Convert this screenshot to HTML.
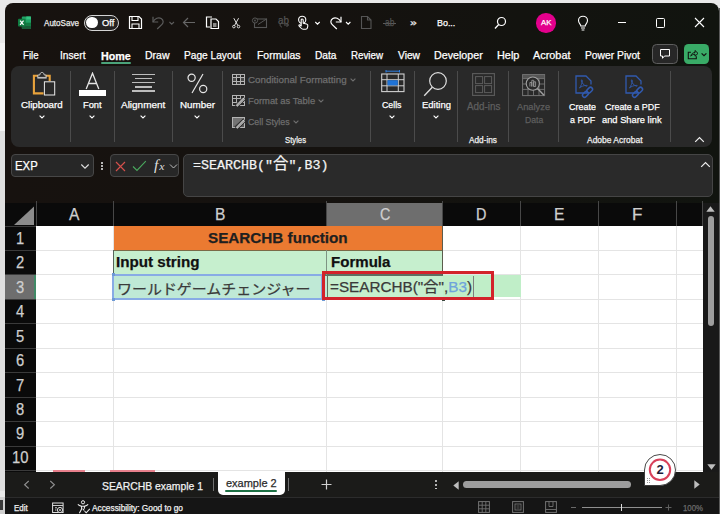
<!DOCTYPE html><html lang="en"><head><meta charset="utf-8"><title>Excel - SEARCHB function</title><style>
html,body{margin:0;padding:0}
body{width:720px;height:514px;overflow:hidden;position:relative;background:#e9e9e9;font-family:"Liberation Sans","Noto Sans CJK JP",sans-serif}
#r div,#r svg{position:absolute;display:block}
#r div.t{-webkit-text-stroke:0.25px;white-space:nowrap;transform-origin:0 50%;line-height:20px;height:20px}
#r{position:absolute;left:0;top:0;width:720px;height:514px;overflow:hidden}
</style></head><body><div id="r">
<div style="left:0px;top:0px;width:720px;height:514px;background:#e9e9e9;"></div>
<div style="left:0px;top:43px;width:5px;height:88px;background:#f4f4f4;"></div>
<div style="left:0px;top:131px;width:5px;height:360px;background:#dfdfdf;"></div>
<div style="left:719px;top:8px;width:1px;height:506px;background:#5a5a5a;"></div>
<div style="left:4.5px;top:3px;width:714.3px;height:520px;background:linear-gradient(90deg,#17120f 0%,#15120f 45%,#11140f 100%);border-radius:8px"></div>
<svg style="left:18px;top:15.7px;" width="13.4" height="13.4" viewBox="0 0 14 14">
<rect x="4" y="0.5" width="9.5" height="13" rx="1" fill="#21a366"/>
<rect x="8.7" y="0.5" width="4.8" height="3.3" fill="#33c481"/>
<rect x="8.7" y="3.8" width="4.8" height="3.2" fill="#21a366"/>
<rect x="8.7" y="7" width="4.8" height="3.2" fill="#107c41"/>
<rect x="4" y="7" width="4.7" height="3.2" fill="#185c37"/>
<rect x="4" y="10.2" width="9.5" height="3.3" rx="1" fill="#185c37"/>
<rect x="0" y="3" width="8" height="8" rx="1" fill="#107c41"/>
<path d="M2.2 4.8 L5.8 9.2 M5.8 4.8 L2.2 9.2" stroke="#fff" stroke-width="1.3"/>
</svg>
<div style="left:84.2px;top:15px;width:33.2px;height:13.8px;background:#242322;border:1px solid #d4d4d4;border-radius:9px"></div>
<div style="left:86.4px;top:17.4px;width:11.2px;height:11px;background:#ffffff;border-radius:50%"></div>
<svg style="left:128px;top:15px;" width="15" height="15" viewBox="0 0 15 15"><path d="M1.5 1.5 H11 L13.5 4 V13.5 H1.5 Z" fill="none" stroke="#fff" stroke-width="1.2"/>
<path d="M4 1.5 V5.5 H10 V1.5 M4 13.5 V9 H11 V13.5" fill="none" stroke="#fff" stroke-width="1.1"/></svg>
<svg style="left:151px;top:15px;" width="26" height="15" viewBox="0 0 26 15"><path d="M2 1.8 V7 H7.2" fill="none" stroke="#5c5c5c" stroke-width="1.2"/>
<path d="M2 7 C4 3.5 7.5 1.8 10.2 3.5 C12.8 5.2 12.5 7.8 11 9.3 L6.2 14" fill="none" stroke="#5c5c5c" stroke-width="1.2"/>
<path d="M18.5 7 L20.7 9.2 L23 7" fill="none" stroke="#5c5c5c" stroke-width="1.1"/></svg>
<svg style="left:182px;top:15px;" width="15" height="15" viewBox="0 0 15 15"><path d="M1.5 7.5 H13 M6 3 L1.5 7.5 L6 12" fill="none" stroke="#666" stroke-width="1.2"/></svg>
<svg style="left:205px;top:15px;" width="15" height="15" viewBox="0 0 15 15"><path d="M7 2 H1.5 V12 H5" fill="none" stroke="#fff" stroke-width="1.2"/>
<path d="M6 4 H11 L13.5 6.5 V13.5 H6 Z" fill="#15120f" stroke="#fff" stroke-width="1.2"/>
<path d="M8 9 H11.5 M8 11 H11.5" stroke="#fff" stroke-width="1"/></svg>
<svg style="left:230.8px;top:15.5px;" width="10.4" height="14" viewBox="0 0 13 15"><path d="M3.5 1.5 L8.5 10.5 M9.5 1.5 L4.5 10.5" stroke="#fff" stroke-width="1.1" fill="none"/>
<circle cx="3.6" cy="12" r="1.6" fill="none" stroke="#fff" stroke-width="1"/><circle cx="9.4" cy="12" r="1.6" fill="none" stroke="#fff" stroke-width="1"/></svg>
<svg style="left:251px;top:15px;" width="17" height="15" viewBox="0 0 17 15"><rect x="3.5" y="4" width="12" height="8.5" fill="none" stroke="#555555" stroke-width="1.1"/>
<path d="M15.5 4 L7 9.5" stroke="#555555" stroke-width="1" fill="none"/>
<circle cx="4" cy="5.5" r="2.6" fill="#15120f" stroke="#555555" stroke-width="1"/><circle cx="4" cy="5.5" r="0.9" fill="#555555"/></svg>
<svg style="left:277px;top:22px;" width="13" height="8" viewBox="0 0 13 8"><path d="M5 1 C2.5 1 2.5 5 5 5 M7 3 H11.5 M9.5 1 L11.5 3 L9.5 5 M7.5 3" fill="none" stroke="#555555" stroke-width="1"/></svg>
<svg style="left:296.5px;top:15px;" width="26" height="15" viewBox="0 0 26 15"><circle cx="5.2" cy="4.8" r="3.6" fill="none" stroke="#fff" stroke-width="1.1"/>
<path d="M4.2 11 V5 C4.2 3.6 6.2 3.6 6.2 5 V8.2 L9.6 9 C10.8 9.3 11 10 10.8 11 L10.4 12.8 C10.2 13.8 9.6 14.2 8.6 14.2 H6.2 C5.2 14.2 4.6 13.8 3.9 13 L2 10.8 C1.6 10.2 2.4 9.5 3 10 Z" fill="#15120f" stroke="#fff" stroke-width="1.1" stroke-linejoin="round"/>
<path d="M18.3 7 L20.5 9.2 L22.7 7" fill="none" stroke="#fff" stroke-width="1.1"/></svg>
<svg style="left:329px;top:15px;" width="24" height="15" viewBox="0 0 24 15"><path d="M12 1.8 V7 H6.8" fill="none" stroke="#fff" stroke-width="1.2"/>
<path d="M12 7 C10 3.5 6.5 1.8 3.8 3.5 C1.2 5.2 1.5 7.8 3 9.3 L7.8 14" fill="none" stroke="#fff" stroke-width="1.2"/>
<path d="M17 7 L19.2 9.2 L21.4 7" fill="none" stroke="#fff" stroke-width="1.1"/></svg>
<svg style="left:360px;top:15px;" width="13" height="15" viewBox="0 0 13 15"><path d="M1.5 1.5 H7.5 L11 5 V13.5 H1.5 Z M7.5 1.5 V5 H11" fill="none" stroke="#555555" stroke-width="1.1"/></svg>
<div style="left:383px;top:23.4px;width:13px;height:1px;background:#5a5a5a;"></div>
<svg style="left:494px;top:15.5px;" width="13" height="14" viewBox="0 0 13 14"><circle cx="7.5" cy="5.5" r="4" fill="none" stroke="#fff" stroke-width="1.2"/><path d="M4.7 8.5 L1 12.5" stroke="#fff" stroke-width="1.3"/></svg>
<div style="left:536px;top:13px;width:19.5px;height:19.5px;background:#e3008c;border-radius:50%"></div>
<svg style="left:576px;top:14.5px;" width="14" height="17" viewBox="0 0 14 17"><path d="M4.8 11 C4.8 9 2.5 8.5 2.5 5.5 C2.5 3 4.5 1.2 7 1.2 C9.5 1.2 11.5 3 11.5 5.5 C11.5 8.5 9.2 9 9.2 11 Z M5 13 H9 M5.6 15 H8.4" fill="none" stroke="#fff" stroke-width="1.1"/></svg>
<div style="left:617.5px;top:21.7px;width:8.5px;height:1px;background:#ffffff;"></div>
<div style="left:655.8px;top:18px;width:7.5px;height:7.5px;background:transparent;border:1px solid #fff;border-radius:1.5px"></div>
<svg style="left:694px;top:17px;" width="11" height="11" viewBox="0 0 11 11"><path d="M1 1 L10 10 M10 1 L1 10" stroke="#fff" stroke-width="1.1"/></svg>
<div style="left:101px;top:62.2px;width:30px;height:1.8px;background:#4ba37a;border-radius:1px"></div>
<div style="left:652.3px;top:44.2px;width:23.3px;height:17.8px;background:#272727;border:1px solid #5e5e5e;border-radius:4.5px"></div>
<svg style="left:658.8px;top:48.3px;" width="12" height="12" viewBox="0 0 12 12"><path d="M1.5 1.5 H10.5 V8 H5.5 L3.5 10.3 V8 H1.5 Z" fill="none" stroke="#fff" stroke-width="1"/></svg>
<div style="left:683.8px;top:44.2px;width:25.6px;height:19.8px;background:#39ab67;border-radius:4.5px"></div>
<svg style="left:686.5px;top:47.5px;" width="22" height="13" viewBox="0 0 22 13"><path d="M4 4.3 H1.3 V10.7 H9.3 V8.3" fill="none" stroke="#10130f" stroke-width="1.1"/>
<path d="M3.8 8.2 C4.3 5.6 6 4.6 8 4.6 V2.5 L11 5.4 L8 8.2 V6.3 C6.2 6.3 4.8 6.8 3.8 8.2 Z" fill="none" stroke="#10130f" stroke-width="1"/>
<path d="M14.6 5.3 L17 7.7 L19.4 5.3" fill="none" stroke="#10130f" stroke-width="1.2"/></svg>
<div style="left:11px;top:66.3px;width:701.2px;height:80.7px;background:#292929;border-radius:8px"></div>
<div style="left:70.1px;top:71px;width:1px;height:71px;background:#4b4b4b;"></div>
<div style="left:114.0px;top:71px;width:1px;height:71px;background:#4b4b4b;"></div>
<div style="left:172.0px;top:71px;width:1px;height:71px;background:#4b4b4b;"></div>
<div style="left:221.7px;top:71px;width:1px;height:71px;background:#4b4b4b;"></div>
<div style="left:369.9px;top:71px;width:1px;height:71px;background:#4b4b4b;"></div>
<div style="left:413.9px;top:71px;width:1px;height:71px;background:#4b4b4b;"></div>
<div style="left:456.8px;top:71px;width:1px;height:71px;background:#4b4b4b;"></div>
<div style="left:508.0px;top:71px;width:1px;height:71px;background:#4b4b4b;"></div>
<div style="left:558.2px;top:71px;width:1px;height:71px;background:#4b4b4b;"></div>
<div style="left:669.8px;top:71px;width:1px;height:71px;background:#4b4b4b;"></div>
<svg style="left:32px;top:71px;" width="24" height="25" viewBox="0 0 24 25"><path d="M6 4.7 H1.9 V22.4 H11.5" fill="none" stroke="#e9a33c" stroke-width="2.1"/>
<path d="M13.5 4.7 H17.7 V10" fill="none" stroke="#e9a33c" stroke-width="2.1"/>
<path d="M5.8 6.3 V4 H7.8 C7.8 0.6 12.2 0.6 12.2 4 H14.2 V6.3" fill="none" stroke="#c4c4c4" stroke-width="1"/>
<rect x="5.3" y="5.9" width="9.4" height="1.7" fill="#bdbdbd"/>
<rect x="12.4" y="10.8" width="10.3" height="13.2" fill="#292929" stroke="#ececec" stroke-width="1"/></svg>
<svg style="left:37.5px;top:114px;" width="8" height="6" viewBox="0 0 8 6"><path d="M1.6 1.6 L4 4 L6.4 1.6" fill="none" stroke="#ffffff" stroke-width="1.1"/></svg>
<svg style="left:85px;top:71.5px;" width="15" height="18" viewBox="0 0 15 18"><path d="M1.2 17 L7.5 1.2 L13.8 17 M3.6 11.5 H11.4" fill="none" stroke="#e6e6e6" stroke-width="1.3"/></svg>
<div style="left:79.3px;top:90px;width:26.7px;height:6.2px;background:#ffffff;"></div>
<svg style="left:88.3px;top:114px;" width="8" height="6" viewBox="0 0 8 6"><path d="M1.6 1.6 L4 4 L6.4 1.6" fill="none" stroke="#ffffff" stroke-width="1.1"/></svg>
<div style="left:132px;top:73.8px;width:23px;height:1.4px;background:#bcbcbc;"></div>
<div style="left:134.6px;top:77.95px;width:17.200000000000017px;height:1.4px;background:#bcbcbc;"></div>
<div style="left:132px;top:82.1px;width:23px;height:1.4px;background:#bcbcbc;"></div>
<div style="left:134.6px;top:86.25px;width:17.200000000000017px;height:1.4px;background:#bcbcbc;"></div>
<div style="left:132px;top:90.4px;width:23px;height:1.4px;background:#bcbcbc;"></div>
<svg style="left:138.7px;top:114px;" width="8" height="6" viewBox="0 0 8 6"><path d="M1.6 1.6 L4 4 L6.4 1.6" fill="none" stroke="#ffffff" stroke-width="1.1"/></svg>
<svg style="left:186.5px;top:72.5px;" width="21" height="21" viewBox="0 0 21 21"><circle cx="4.6" cy="4.8" r="3.6" fill="none" stroke="#e6e6e6" stroke-width="1.2"/><circle cx="16.2" cy="16" r="3.6" fill="none" stroke="#e6e6e6" stroke-width="1.2"/><path d="M16 1 L5 20" stroke="#e6e6e6" stroke-width="1.2"/></svg>
<svg style="left:193px;top:114px;" width="8" height="6" viewBox="0 0 8 6"><path d="M1.6 1.6 L4 4 L6.4 1.6" fill="none" stroke="#ffffff" stroke-width="1.1"/></svg>
<svg style="left:232px;top:73px;" width="14" height="13" viewBox="0 0 14 13"><rect x="0.5" y="1.5" width="12" height="10" fill="none" stroke="#b4b4b4" stroke-width="1"/><rect x="1" y="5" width="11" height="3" fill="#4a4a4a"/><rect x="5" y="2" width="3.5" height="9" fill="#3c3c3c"/><path d="M0.5 4.5 H12.5 M0.5 8.5 H12.5 M4.5 1.5 V11.5 M8.5 1.5 V11.5" stroke="#b4b4b4" stroke-width="1"/><rect x="5" y="5" width="3" height="3" fill="#1e1e1e"/></svg>
<svg style="left:232px;top:94px;" width="14" height="13" viewBox="0 0 14 13"><rect x="0.5" y="1.5" width="12" height="10" fill="none" stroke="#b4b4b4" stroke-width="1"/><path d="M0.5 4.5 H12.5 M0.5 8.5 H12.5 M4.5 1.5 V11.5 M8.5 1.5 V11.5" stroke="#b4b4b4" stroke-width="1"/><path d="M4.2 12.4 L12.6 4" stroke="#292929" stroke-width="4.2"/><path d="M4.6 12 L12.2 4.4" stroke="#d6d6d6" stroke-width="2.2"/><path d="M4.9 11.7 L11.9 4.7" stroke="#555" stroke-width="0.7"/></svg>
<svg style="left:232px;top:116px;" width="14" height="13" viewBox="0 0 14 13"><rect x="0.5" y="1.5" width="12" height="10" fill="#585858" stroke="#b4b4b4" stroke-width="1"/><path d="M1 2 H12 L1 11 Z" fill="#747474"/><path d="M4.2 12.4 L12.6 4" stroke="#292929" stroke-width="4.2"/><path d="M4.6 12 L12.2 4.4" stroke="#d6d6d6" stroke-width="2.2"/><path d="M4.9 11.7 L11.9 4.7" stroke="#555" stroke-width="0.7"/></svg>
<svg style="left:349px;top:77px;" width="8" height="6" viewBox="0 0 8 6"><path d="M1.6 1.6 L4 4 L6.4 1.6" fill="none" stroke="#6f6f6f" stroke-width="1.1"/></svg>
<svg style="left:317px;top:98px;" width="8" height="6" viewBox="0 0 8 6"><path d="M1.6 1.6 L4 4 L6.4 1.6" fill="none" stroke="#6f6f6f" stroke-width="1.1"/></svg>
<svg style="left:292px;top:119px;" width="8" height="6" viewBox="0 0 8 6"><path d="M1.6 1.6 L4 4 L6.4 1.6" fill="none" stroke="#6f6f6f" stroke-width="1.1"/></svg>
<svg style="left:380.5px;top:69px;" width="24" height="24" viewBox="0 0 24 24"><path d="M5 1 V3.5 M18.5 1 V3.5 M5 2.2 H18.5" stroke="#2f7fe0" stroke-width="1" fill="none"/>
<rect x="0.7" y="5" width="22.3" height="17.6" fill="none" stroke="#d0d0d0" stroke-width="1.1"/>
<path d="M0.7 10.7 H23 M0.7 16.8 H23 M6 5 V22.6 M17.3 5 V22.6" stroke="#d0d0d0" stroke-width="1"/>
<rect x="6.5" y="11.2" width="10.3" height="5.2" fill="#1f73d6"/></svg>
<svg style="left:387.8px;top:114px;" width="8" height="6" viewBox="0 0 8 6"><path d="M1.6 1.6 L4 4 L6.4 1.6" fill="none" stroke="#ffffff" stroke-width="1.1"/></svg>
<svg style="left:423px;top:70.5px;" width="25" height="26" viewBox="0 0 25 26"><circle cx="15" cy="10" r="8.3" fill="none" stroke="#e0e0e0" stroke-width="1.2"/><path d="M9.3 16.2 L1.2 24.7" stroke="#e0e0e0" stroke-width="1.3"/></svg>
<svg style="left:431.5px;top:114px;" width="8" height="6" viewBox="0 0 8 6"><path d="M1.6 1.6 L4 4 L6.4 1.6" fill="none" stroke="#ffffff" stroke-width="1.1"/></svg>
<svg style="left:472px;top:73px;" width="23" height="23" viewBox="0 0 23 23"><rect x="0.6" y="0.6" width="21.8" height="21.8" fill="none" stroke="#5c5c5c" stroke-width="1.1"/>
<rect x="3.6" y="3.6" width="7" height="7" fill="none" stroke="#5c5c5c" stroke-width="1"/><rect x="12.6" y="3.6" width="7" height="7" fill="none" stroke="#5c5c5c" stroke-width="1"/>
<rect x="3.6" y="12.6" width="7" height="7" fill="none" stroke="#5c5c5c" stroke-width="1"/><rect x="12.6" y="12.6" width="7" height="7" fill="none" stroke="#5c5c5c" stroke-width="1"/></svg>
<svg style="left:522px;top:73.5px;" width="24" height="23" viewBox="0 0 24 23"><rect x="0.6" y="0.6" width="22" height="21" fill="none" stroke="#757575" stroke-width="1"/>
<rect x="1" y="1" width="21.2" height="3.4" fill="#555555"/>
<path d="M0.6 4.6 H22.6 M0.6 10 H22.6 M0.6 15.4 H22.6 M6 4.6 V21.6 M11.5 4.6 V21.6 M17 4.6 V21.6" stroke="#757575" stroke-width="0.9"/>
<circle cx="10.8" cy="9.6" r="6.6" fill="#292929" stroke="#a0a0a0" stroke-width="1.1"/>
<path d="M7.9 12.5 V8.5 H9.8 V12.5 M9.8 12.5 V6.3 H11.7 V12.5 M11.7 12.5 V7.8 H13.6 V12.5 Z" fill="none" stroke="#a0a0a0" stroke-width="0.8"/>
<path d="M15.5 14.5 L22 21.3" stroke="#a0a0a0" stroke-width="1.4"/></svg>
<svg style="left:574.3px;top:74.6px;" width="21" height="24" viewBox="0 0 21 24"><path d="M13 18 H2 V1 H12 L17 6 V9.5" fill="none" stroke="#315aaf" stroke-width="1.3"/>
<path d="M5.5 13 C7 11 8.5 7.5 8.3 5.5 C8.1 4.3 7.2 4.6 7.4 5.8 C7.8 8 10 10.5 12.5 11.2 C13.6 11.5 13.6 10.4 12.4 10.4 C10 10.4 7 11.5 5.5 13 Z" fill="none" stroke="#315aaf" stroke-width="0.9"/>
<g fill="none" stroke="#315aaf" stroke-width="1.5"><rect x="12.4" y="13.2" width="6.5" height="4" rx="2" transform="rotate(-45 15.6 15.2)"/><rect x="8.2" y="17.4" width="6.5" height="4" rx="2" transform="rotate(-45 11.4 19.4)"/></g></svg>
<svg style="left:624.3px;top:74.6px;" width="21" height="24" viewBox="0 0 21 24"><path d="M13 18 H2 V1 H12 L17 6 V9.5" fill="none" stroke="#315aaf" stroke-width="1.3"/>
<path d="M5.5 13 C7 11 8.5 7.5 8.3 5.5 C8.1 4.3 7.2 4.6 7.4 5.8 C7.8 8 10 10.5 12.5 11.2 C13.6 11.5 13.6 10.4 12.4 10.4 C10 10.4 7 11.5 5.5 13 Z" fill="none" stroke="#315aaf" stroke-width="0.9"/>
<g fill="none" stroke="#315aaf" stroke-width="1.5"><rect x="12.4" y="13.2" width="6.5" height="4" rx="2" transform="rotate(-45 15.6 15.2)"/><rect x="8.2" y="17.4" width="6.5" height="4" rx="2" transform="rotate(-45 11.4 19.4)"/></g></svg>
<svg style="left:693.5px;top:136px;" width="11" height="7" viewBox="0 0 11 7"><path d="M1.2 5.8 L5.5 1.5 L9.8 5.8" fill="none" stroke="#f0f0f0" stroke-width="1.2"/></svg>
<div style="left:11px;top:154.2px;width:82.6px;height:23px;background:#272727;border:1px solid #474747;border-radius:4px;box-sizing:border-box"></div>
<svg style="left:80px;top:162.5px;" width="10" height="7" viewBox="0 0 10 7"><path d="M1.3 1.5 L5 5.2 L8.7 1.5" fill="none" stroke="#e0e0e0" stroke-width="1.1"/></svg>
<div style="left:101.3px;top:162.0px;width:1.6px;height:1.6px;background:#d8d8d8;border-radius:50%"></div>
<div style="left:101.3px;top:165.2px;width:1.6px;height:1.6px;background:#d8d8d8;border-radius:50%"></div>
<div style="left:101.3px;top:168.4px;width:1.6px;height:1.6px;background:#d8d8d8;border-radius:50%"></div>
<div style="left:110px;top:154.2px;width:68.6px;height:23px;background:#272727;border:1px solid #474747;border-radius:4px;box-sizing:border-box"></div>
<svg style="left:114.5px;top:160.5px;" width="11" height="11" viewBox="0 0 11 11"><path d="M1 1 L10 10 M10 1 L1 10" stroke="#d4504c" stroke-width="1.15"/></svg>
<svg style="left:132px;top:160px;" width="15" height="12" viewBox="0 0 15 12"><path d="M1 6.5 L5 10.5 L13.8 1.2" fill="none" stroke="#4aa85e" stroke-width="1.1"/></svg>
<svg style="left:169px;top:162.5px;" width="9" height="7" viewBox="0 0 9 7"><path d="M1 1.5 L4.5 5 L8 1.5" fill="none" stroke="#bdbdbd" stroke-width="1"/></svg>
<div style="left:182.5px;top:154.1px;width:530.8px;height:43px;background:#2a2a2a;border:1px solid #454545;border-radius:5px;box-sizing:border-box"></div>
<svg style="left:699.5px;top:161px;" width="11" height="7" viewBox="0 0 11 7"><path d="M1.2 5.8 L5.5 1.5 L9.8 5.8" fill="none" stroke="#f0f0f0" stroke-width="1.2"/></svg>
<div style="left:5px;top:202.6px;width:698px;height:270px;background:#0a0a0a;"></div>
<div style="left:36px;top:226px;width:666.5px;height:246px;background:#ffffff;"></div>
<svg style="left:13px;top:205.5px;" width="22" height="20" viewBox="0 0 22 20"><path d="M21 0.5 V19 H1 Z" fill="#8c8c8c"/></svg>
<div style="left:326.9px;top:202.6px;width:115.7px;height:23.400000000000006px;background:#6e6e6e;"></div>
<div style="left:5px;top:274.9px;width:31px;height:24.45px;background:#6e6e6e;"></div>
<div style="left:34.4px;top:274.9px;width:1.4px;height:24.45px;background:#3f8a66;"></div>
<div style="left:35.5px;top:200.6px;width:1px;height:25.400000000000006px;background:#474747;"></div>
<div style="left:113.0px;top:200.6px;width:1px;height:25.400000000000006px;background:#474747;"></div>
<div style="left:326.4px;top:200.6px;width:1px;height:25.400000000000006px;background:#474747;"></div>
<div style="left:442.1px;top:200.6px;width:1px;height:25.400000000000006px;background:#474747;"></div>
<div style="left:520.0px;top:200.6px;width:1px;height:25.400000000000006px;background:#474747;"></div>
<div style="left:598.0px;top:200.6px;width:1px;height:25.400000000000006px;background:#474747;"></div>
<div style="left:675.8px;top:200.6px;width:1px;height:25.400000000000006px;background:#474747;"></div>
<div style="left:702.0px;top:200.6px;width:1px;height:25.400000000000006px;background:#474747;"></div>
<div style="left:5px;top:225.5px;width:31px;height:1px;background:#3a3a3a;"></div>
<div style="left:5px;top:249.95px;width:31px;height:1px;background:#3a3a3a;"></div>
<div style="left:5px;top:274.4px;width:31px;height:1px;background:#3a3a3a;"></div>
<div style="left:5px;top:298.85px;width:31px;height:1px;background:#3a3a3a;"></div>
<div style="left:5px;top:323.3px;width:31px;height:1px;background:#3a3a3a;"></div>
<div style="left:5px;top:347.75px;width:31px;height:1px;background:#3a3a3a;"></div>
<div style="left:5px;top:372.2px;width:31px;height:1px;background:#3a3a3a;"></div>
<div style="left:5px;top:396.65px;width:31px;height:1px;background:#3a3a3a;"></div>
<div style="left:5px;top:421.1px;width:31px;height:1px;background:#3a3a3a;"></div>
<div style="left:5px;top:445.54999999999995px;width:31px;height:1px;background:#3a3a3a;"></div>
<div style="left:5px;top:470.0px;width:31px;height:1px;background:#3a3a3a;"></div>
<div style="left:113.0px;top:226px;width:1px;height:246px;background:#e4e4e4;"></div>
<div style="left:326.4px;top:226px;width:1px;height:246px;background:#e4e4e4;"></div>
<div style="left:442.1px;top:226px;width:1px;height:246px;background:#e4e4e4;"></div>
<div style="left:520.0px;top:226px;width:1px;height:246px;background:#e4e4e4;"></div>
<div style="left:598.0px;top:226px;width:1px;height:246px;background:#e4e4e4;"></div>
<div style="left:675.8px;top:226px;width:1px;height:246px;background:#e4e4e4;"></div>
<div style="left:36px;top:249.95px;width:666.5px;height:1px;background:#e4e4e4;"></div>
<div style="left:36px;top:274.4px;width:666.5px;height:1px;background:#e4e4e4;"></div>
<div style="left:36px;top:298.85px;width:666.5px;height:1px;background:#e4e4e4;"></div>
<div style="left:36px;top:323.3px;width:666.5px;height:1px;background:#e4e4e4;"></div>
<div style="left:36px;top:347.75px;width:666.5px;height:1px;background:#e4e4e4;"></div>
<div style="left:36px;top:372.2px;width:666.5px;height:1px;background:#e4e4e4;"></div>
<div style="left:36px;top:396.65px;width:666.5px;height:1px;background:#e4e4e4;"></div>
<div style="left:36px;top:421.1px;width:666.5px;height:1px;background:#e4e4e4;"></div>
<div style="left:36px;top:445.54999999999995px;width:666.5px;height:1px;background:#e4e4e4;"></div>
<div style="left:36px;top:470.0px;width:666.5px;height:1px;background:#e4e4e4;"></div>
<div style="left:113.5px;top:226px;width:329px;height:24.45px;background:#eb7a31;"></div>
<div style="left:113.5px;top:250.45px;width:329px;height:24.45px;background:#c6efce;"></div>
<div style="left:113.5px;top:274.9px;width:329px;height:24.45px;background:#c6efce;"></div>
<div style="left:442.5px;top:275.29999999999995px;width:78px;height:22px;background:#c0eec8;"></div>
<div style="left:113.5px;top:274.9px;width:213.5px;height:24.45px;background:#bfe9d6;"></div>
<div style="left:113.5px;top:250.35px;width:329px;height:1px;background:#7a6a48;"></div>
<div style="left:113px;top:274.4px;width:329.5px;height:1.2px;background:#5f6f62;"></div>
<div style="left:326.2px;top:250.45px;width:1.2px;height:24.45px;background:#7e9483;"></div>
<div style="left:442.1px;top:226px;width:1px;height:48.9px;background:#5c5c4c;"></div>
<div style="left:113.2px;top:250.45px;width:1.1px;height:24.45px;background:#55655a;"></div>
<div style="left:326.5px;top:274.9px;width:1.5px;height:24.45px;background:#5d7262;"></div>
<div style="left:327px;top:298.35px;width:116px;height:1.5px;background:#5d7262;"></div>
<div style="left:441.5px;top:297.85px;width:3px;height:3px;background:#3c4a40;"></div>
<div style="left:112.3px;top:274.0px;width:211.2px;height:26.45px;background:transparent;border:2px solid #88abe5;box-sizing:border-box"></div>
<div style="left:112px;top:273.4px;width:3px;height:3px;background:#6e9ad6;"></div>
<div style="left:321.5px;top:273.4px;width:3px;height:3px;background:#6e9ad6;"></div>
<div style="left:112px;top:297.85px;width:3px;height:3px;background:#6e9ad6;"></div>
<div style="left:321.5px;top:297.85px;width:3px;height:3px;background:#6e9ad6;"></div>
<div style="left:472.9px;top:276px;width:1px;height:21.5px;background:#7d7d7d;"></div>
<div style="left:703px;top:202.6px;width:16px;height:270px;background:#191919;"></div>
<svg style="left:706px;top:205.8px;" width="9" height="6" viewBox="0 0 9 6"><path d="M4.5 0.3 L8.7 5.7 H0.3 Z" fill="#bdbdbd"/></svg>
<div style="left:707.5px;top:216px;width:6.3px;height:110px;background:#9d9d9d;border-radius:3.2px"></div>
<svg style="left:706.5px;top:464px;" width="9" height="6" viewBox="0 0 9 6"><path d="M0.3 0.3 H8.7 L4.5 5.7 Z" fill="#bdbdbd"/></svg>
<div style="left:5px;top:472px;width:714px;height:25px;background:#1b1b19;"></div>
<div style="left:53px;top:470px;width:32px;height:2.2px;background:#e8808c;"></div>
<div style="left:110px;top:470px;width:45px;height:2.2px;background:#e8808c;"></div>
<svg style="left:22.5px;top:480px;" width="7" height="9.5" viewBox="0 0 7 9.5"><path d="M5.7 1 L1.6 4.75 L5.7 8.5" fill="none" stroke="#909090" stroke-width="1.1"/></svg>
<svg style="left:49px;top:480px;" width="7" height="9.5" viewBox="0 0 7 9.5"><path d="M1.3 1 L5.4 4.75 L1.3 8.5" fill="none" stroke="#909090" stroke-width="1.1"/></svg>
<div style="left:213px;top:478px;width:1px;height:13px;background:#707070;"></div>
<div style="left:218.3px;top:472px;width:66.7px;height:23px;background:#ffffff;border-radius:0 0 5px 5px"></div>
<div style="left:225px;top:490.4px;width:52.3px;height:1.4px;background:#1e7145;border-radius:1px"></div>
<div style="left:287.5px;top:478px;width:1px;height:13px;background:#707070;"></div>
<svg style="left:320.5px;top:478.5px;" width="11" height="11" viewBox="0 0 11 11"><path d="M5.5 0.5 V10.5 M0.5 5.5 H10.5" stroke="#d0d0d0" stroke-width="1.2"/></svg>
<div style="left:434.8px;top:480.3px;width:1.8px;height:1.8px;background:#e0e0e0;border-radius:50%"></div>
<div style="left:434.8px;top:483.90000000000003px;width:1.8px;height:1.8px;background:#e0e0e0;border-radius:50%"></div>
<div style="left:434.8px;top:487.5px;width:1.8px;height:1.8px;background:#e0e0e0;border-radius:50%"></div>
<svg style="left:452.5px;top:480.5px;" width="6" height="9" viewBox="0 0 6 9"><path d="M0.3 4.5 L5.7 0.3 V8.7 Z" fill="#bdbdbd"/></svg>
<div style="left:463px;top:481.3px;width:167.5px;height:7px;background:#9d9d9d;border-radius:3.5px"></div>
<svg style="left:693.5px;top:480px;" width="6" height="9" viewBox="0 0 6 9"><path d="M5.7 4.5 L0.3 0.3 V8.7 Z" fill="#bdbdbd"/></svg>
<div style="left:688px;top:476px;width:16px;height:17px;background:#222;border-radius:8px;z-index:-1;display:none"></div>
<div style="left:5px;top:497px;width:714px;height:20px;background:#151515;"></div>
<div style="left:5px;top:496.5px;width:714px;height:1px;background:#2c2c2c;"></div>
<svg style="left:52px;top:501.5px;" width="12" height="12" viewBox="0 0 12 12"><rect x="0.6" y="1" width="10.5" height="9.5" fill="none" stroke="#e0e0e0" stroke-width="1"/><path d="M0.6 3.5 H11 M3 5.8 H5 M3 8 H4.5" stroke="#e0e0e0" stroke-width="0.9"/><circle cx="8" cy="8" r="2.6" fill="#171717" stroke="#e0e0e0" stroke-width="1"/><circle cx="8" cy="8" r="0.9" fill="#e0e0e0"/></svg>
<svg style="left:76.5px;top:500px;" width="14" height="14" viewBox="0 0 14 14"><circle cx="6" cy="2.3" r="1.6" fill="none" stroke="#ececec" stroke-width="1"/><path d="M1.2 4.6 C2.5 6 4 6 4.6 6.2 V9 L2.6 12.8 M10.8 4.6 C9.5 6 8 6 7.4 6.2 V8.2 M4.6 6.2 H7.4 M6 9 L7 10.2" fill="none" stroke="#ececec" stroke-width="1.1" stroke-linecap="round"/><path d="M7.6 11.2 L9.2 12.8 L12.8 8.8" fill="none" stroke="#ececec" stroke-width="1.1"/></svg>
<svg style="left:478px;top:501px;" width="12" height="12" viewBox="0 0 12 12"><rect x="0.6" y="0.6" width="10.8" height="10.8" fill="none" stroke="#727272" stroke-width="1"/><path d="M0.6 4.2 H11.4 M0.6 7.8 H11.4 M4.2 0.6 V11.4 M7.8 0.6 V11.4" stroke="#727272" stroke-width="0.9"/></svg>
<svg style="left:512px;top:501px;" width="12" height="12" viewBox="0 0 12 12"><rect x="0.6" y="0.6" width="10.8" height="10.8" fill="none" stroke="#727272" stroke-width="1"/><rect x="3" y="3" width="6" height="6" fill="none" stroke="#727272" stroke-width="0.9"/><path d="M4.5 5 H7.5 M4.5 7 H7.5" stroke="#727272" stroke-width="0.7"/></svg>
<svg style="left:544.5px;top:501px;" width="12" height="12" viewBox="0 0 12 12"><rect x="0.6" y="0.6" width="10.8" height="10.8" fill="none" stroke="#727272" stroke-width="1"/><path d="M4 0.6 V5.5 H8 V0.6 M0.6 8.5 H11.4" stroke="#727272" stroke-width="0.9" fill="none"/></svg>
<div style="left:571px;top:506.8px;width:5px;height:1px;background:#6a6a6a;"></div>
<div style="left:581.7px;top:506.5px;width:80px;height:1.6px;background:#8f8f8f;"></div>
<div style="left:621px;top:503.6px;width:1.4px;height:7.2px;background:#dcdcdc;"></div>
<svg style="left:665px;top:504px;" width="7" height="7" viewBox="0 0 7 7"><path d="M3.5 0.5 V6.5 M0.5 3.5 H6.5" stroke="#5e5e5e" stroke-width="1"/></svg>
<div style="left:0px;top:497px;width:5px;height:17px;background:#cfcfcf;"></div>
<div style="left:0px;top:500px;width:3px;height:10px;background:#3a3a3a;"></div>
<div class="t" style="left:43.7px;top:13.0px;font-size:8.8px;color:#ececec;transform:scaleX(0.9173);">AutoSave</div>
<div class="t" style="left:101.7px;top:13.0px;font-size:9.6px;color:#ffffff;transform:scaleX(0.9743);">Off</div>
<div class="t" style="left:277.5px;top:10.3px;font-size:10.5px;color:#545454;transform:scaleX(0.9412);">ab</div>
<div class="t" style="left:385.0px;top:12.2px;font-size:11.3px;color:#525252;transform:scaleX(0.7394);">ab</div>
<div class="t" style="left:409.6px;top:12.8px;font-size:9.5px;color:#f0f0f0;transform:scaleX(1.2649);">»</div>
<div class="t" style="left:436.7px;top:13.2px;font-size:9.8px;color:#ffffff;transform:scaleX(0.9079);">Bo...</div>
<div class="t" style="left:540.6px;top:12.8px;font-size:7.5px;color:#ffffff;transform:scaleX(1.0384);">AK</div>
<div class="t" style="left:22.5px;top:45.8px;font-size:10.3px;color:#ffffff;transform:scaleX(0.9341);">File</div>
<div class="t" style="left:59.5px;top:45.8px;font-size:10.3px;color:#ffffff;transform:scaleX(0.9897);">Insert</div>
<div class="t" style="left:144.5px;top:45.8px;font-size:10.3px;color:#ffffff;transform:scaleX(1.0195);">Draw</div>
<div class="t" style="left:184.0px;top:45.8px;font-size:10.3px;color:#ffffff;transform:scaleX(0.9857);">Page Layout</div>
<div class="t" style="left:257.0px;top:45.8px;font-size:10.3px;color:#ffffff;transform:scaleX(1.0135);">Formulas</div>
<div class="t" style="left:314.5px;top:45.8px;font-size:10.3px;color:#ffffff;transform:scaleX(0.9878);">Data</div>
<div class="t" style="left:350.5px;top:45.8px;font-size:10.3px;color:#ffffff;transform:scaleX(0.9477);">Review</div>
<div class="t" style="left:397.5px;top:45.8px;font-size:10.3px;color:#ffffff;transform:scaleX(0.9936);">View</div>
<div class="t" style="left:433.7px;top:45.8px;font-size:10.3px;color:#ffffff;transform:scaleX(1.0397);">Developer</div>
<div class="t" style="left:497.0px;top:45.8px;font-size:10.3px;color:#ffffff;transform:scaleX(1.0572);">Help</div>
<div class="t" style="left:533.0px;top:45.8px;font-size:10.3px;color:#ffffff;transform:scaleX(1.0563);">Acrobat</div>
<div class="t" style="left:585.0px;top:45.8px;font-size:10.3px;color:#ffffff;transform:scaleX(1.0009);">Power Pivot</div>
<div class="t" style="left:100.7px;top:45.8px;font-size:10.5px;color:#ffffff;font-weight:700;transform:scaleX(1.0210);">Home</div>
<div class="t" style="left:21.0px;top:94.8px;font-size:9.8px;color:#ffffff;transform:scaleX(0.9943);">Clipboard</div>
<div class="t" style="left:83.0px;top:94.8px;font-size:9.8px;color:#ffffff;transform:scaleX(0.9485);">Font</div>
<div class="t" style="left:121.4px;top:94.8px;font-size:9.8px;color:#ffffff;transform:scaleX(1.0166);">Alignment</div>
<div class="t" style="left:179.7px;top:94.8px;font-size:9.8px;color:#ffffff;transform:scaleX(1.0040);">Number</div>
<div class="t" style="left:248.4px;top:70.3px;font-size:9.9px;color:#6f6f6f;transform:scaleX(0.9924);">Conditional Formatting</div>
<div class="t" style="left:248.4px;top:91.0px;font-size:9.9px;color:#6f6f6f;transform:scaleX(0.9501);">Format as Table</div>
<div class="t" style="left:248.4px;top:112.3px;font-size:9.9px;color:#6f6f6f;transform:scaleX(0.8916);">Cell Styles</div>
<div class="t" style="left:285.0px;top:129.7px;font-size:8.4px;color:#f0f0f0;transform:scaleX(0.9205);">Styles</div>
<div class="t" style="left:382.0px;top:95.0px;font-size:9.8px;color:#ffffff;transform:scaleX(0.8953);">Cells</div>
<div class="t" style="left:421.5px;top:95.0px;font-size:9.8px;color:#ffffff;transform:scaleX(0.9643);">Editing</div>
<div class="t" style="left:466.7px;top:96.7px;font-size:10px;color:#5f5f5f;transform:scaleX(0.9821);">Add-ins</div>
<div class="t" style="left:469.0px;top:129.7px;font-size:8.5px;color:#f0f0f0;transform:scaleX(0.9713);">Add-ins</div>
<div class="t" style="left:517.4px;top:97.4px;font-size:9.5px;color:#5f5f5f;transform:scaleX(0.9789);">Analyze</div>
<div class="t" style="left:524.5px;top:109.6px;font-size:9.5px;color:#5f5f5f;transform:scaleX(0.9114);">Data</div>
<div class="t" style="left:568.8px;top:97.4px;font-size:9.3px;color:#ffffff;transform:scaleX(0.9639);">Create</div>
<div class="t" style="left:569.7px;top:109.6px;font-size:9.3px;color:#ffffff;transform:scaleX(0.9522);">a PDF</div>
<div class="t" style="left:605.0px;top:97.4px;font-size:9.3px;color:#ffffff;transform:scaleX(0.9605);">Create a PDF</div>
<div class="t" style="left:602.4px;top:109.6px;font-size:9.3px;color:#ffffff;transform:scaleX(1.0027);">and Share link</div>
<div class="t" style="left:586.5px;top:129.9px;font-size:8.6px;color:#f0f0f0;transform:scaleX(0.9842);">Adobe Acrobat</div>
<div class="t" style="left:15.3px;top:155.8px;font-size:13.2px;color:#ffffff;transform:scaleX(0.8602);">EXP</div>
<div class="t" style="left:154.3px;top:155.4px;font-size:14.5px;color:#dedede;font-family:'Liberation Serif', serif;transform:scaleX(1.0730);-webkit-text-stroke:0;letter-spacing:0.8px;"><i>f</i><i style="font-size:11px">x</i></div>
<div class="t" style="left:192.8px;top:156.2px;font-size:13.4px;color:#f4f4f4;font-family:'Liberation Mono', 'Noto Sans CJK JP', monospace;transform:scaleX(0.9959);">=SEARCHB("<span style="font-size:15.5px;line-height:10px">合</span>",B3)</div>
<div class="t" style="left:69.3px;top:205.2px;font-size:16px;color:#cfcfcf;transform:scaleX(0.9745);">A</div>
<div class="t" style="left:214.8px;top:205.2px;font-size:16px;color:#cfcfcf;transform:scaleX(0.9745);">B</div>
<div class="t" style="left:379.8px;top:205.2px;font-size:16px;color:#cfcfcf;transform:scaleX(0.8995);">C</div>
<div class="t" style="left:476.3px;top:205.2px;font-size:16px;color:#cfcfcf;transform:scaleX(0.8995);">D</div>
<div class="t" style="left:554.3px;top:205.2px;font-size:16px;color:#cfcfcf;transform:scaleX(0.9745);">E</div>
<div class="t" style="left:632.3px;top:205.2px;font-size:16px;color:#cfcfcf;transform:scaleX(1.0633);">F</div>
<div class="t" style="left:15.8px;top:227.8px;font-size:16.4px;color:#cfcfcf;transform:scaleX(0.8986);">1</div>
<div class="t" style="left:15.8px;top:252.3px;font-size:16.4px;color:#cfcfcf;transform:scaleX(0.8986);">2</div>
<div class="t" style="left:15.8px;top:276.7px;font-size:16.4px;color:#cfcfcf;transform:scaleX(0.8986);">3</div>
<div class="t" style="left:15.8px;top:301.2px;font-size:16.4px;color:#cfcfcf;transform:scaleX(0.8986);">4</div>
<div class="t" style="left:15.8px;top:325.6px;font-size:16.4px;color:#cfcfcf;transform:scaleX(0.8986);">5</div>
<div class="t" style="left:15.8px;top:350.1px;font-size:16.4px;color:#cfcfcf;transform:scaleX(0.8986);">6</div>
<div class="t" style="left:15.8px;top:374.5px;font-size:16.4px;color:#cfcfcf;transform:scaleX(0.8986);">7</div>
<div class="t" style="left:15.8px;top:399.0px;font-size:16.4px;color:#cfcfcf;transform:scaleX(0.8986);">8</div>
<div class="t" style="left:15.8px;top:423.4px;font-size:16.4px;color:#cfcfcf;transform:scaleX(0.8986);">9</div>
<div class="t" style="left:11.8px;top:447.0px;font-size:16.4px;color:#cfcfcf;transform:scaleX(0.9049);">10</div>
<div class="t" style="left:208.3px;top:228.0px;font-size:14.8px;color:#1f1f1f;font-weight:700;transform:scaleX(1.0299);">SEARCHB function</div>
<div class="t" style="left:116.3px;top:252.1px;font-size:14.8px;color:#111;font-weight:700;transform:scaleX(1.0261);">Input string</div>
<div class="t" style="left:330.6px;top:252.1px;font-size:14.8px;color:#111;font-weight:700;transform:scaleX(1.0176);">Formula</div>
<div class="t" style="left:117.3px;top:277.7px;font-size:14.2px;color:#3a3a3a;font-family:'Noto Sans CJK JP', 'Liberation Sans', sans-serif;transform:scaleX(1.0550);">ワールドゲームチェンジャー</div>
<div class="t" style="left:330.0px;top:276.9px;font-size:15.3px;color:#3a3a3a;transform:scaleX(0.9985);">=SEARCHB("合",<span style="color:#6fa3dc">B3</span>)</div>
<div class="t" style="left:101.7px;top:475.6px;font-size:11.5px;color:#f2f2f2;transform:scaleX(0.9029);">SEARCHB example 1</div>
<div class="t" style="left:226.0px;top:473.4px;font-size:11.6px;color:#2a2a2a;transform:scaleX(0.9477);">example 2</div>
<div class="t" style="left:14.0px;top:497.8px;font-size:8.6px;color:#f0f0f0;transform:scaleX(0.9249);">Edit</div>
<div class="t" style="left:92.3px;top:497.8px;font-size:8.7px;color:#f0f0f0;transform:scaleX(0.9565);">Accessibility: Good to go</div>
<div class="t" style="left:683.3px;top:497.5px;font-size:8.3px;color:#6a6a6a;transform:scaleX(0.9419);">100%</div>
<div style="left:321.8px;top:271.1px;width:172.2px;height:28.8px;border:3.4px solid #d3222a;box-sizing:border-box"></div>
<svg style="left:643px;top:452.5px" width="34" height="34" viewBox="0 0 34 34">
<path d="M1.5 17 A15.5 15.5 0 1 1 17 32.5 H1.5 Z" fill="#fff" stroke="#333" stroke-width="0.9"/>
<circle cx="17" cy="16.8" r="10.2" fill="#fff" stroke="#d8405a" stroke-width="2"/>
<g fill="#999"><rect x="4" y="25" width="1" height="1"/><rect x="6" y="25" width="1" height="1"/><rect x="4" y="27" width="1" height="1"/><rect x="6" y="27" width="1" height="1"/><rect x="4" y="29" width="1" height="1"/><rect x="6" y="29" width="1" height="1"/></g>
<text x="17" y="21.4" text-anchor="middle" font-family="Liberation Sans, sans-serif" font-weight="700" font-size="13" fill="#1b1b3a">2</text></svg>
</div></body></html>
